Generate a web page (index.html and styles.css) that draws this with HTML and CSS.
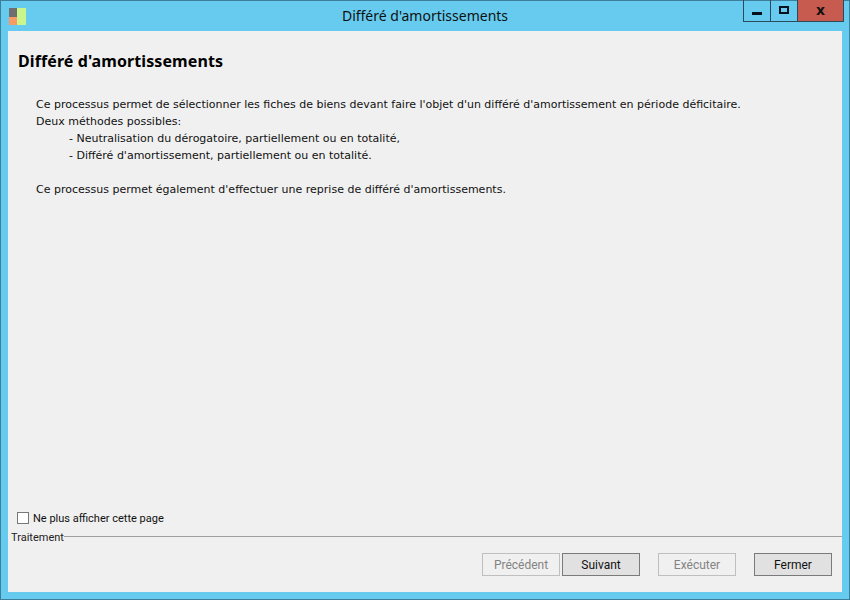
FILE: index.html
```html
<!DOCTYPE html>
<html lang="fr">
<head>
<meta charset="utf-8">
<title>Différé d'amortissements</title>
<link rel="stylesheet" href="styles.css">
</head>
<body>
<div class="window">
  <header class="titlebar">
    <svg class="app-icon" width="17" height="17" viewBox="0 0 17 17">
      <rect x="0" y="0" width="8" height="9" fill="#6f6f6f"/>
      <rect x="0" y="9" width="8" height="8" fill="#f79a66"/>
      <rect x="8" y="0" width="9" height="17" fill="#c9f58c"/>
    </svg>
    <div class="title">Différé d'amortissements</div>
    <div class="controls">
      <div class="ctl ctl-min"><span class="min-glyph"></span></div>
      <div class="ctl ctl-max"><span class="max-glyph"></span></div>
      <div class="ctl ctl-close">x</div>
    </div>
  </header>
  <main class="client">
    <section class="content">
      <h1 class="heading">Différé d'amortissements</h1>
      <div class="desc">
        <p>Ce processus permet de sélectionner les fiches de biens devant faire l'objet d'un différé d'amortissement en période déficitaire.</p>
        <p>Deux méthodes possibles:</p>
        <p class="item">- Neutralisation du dérogatoire, partiellement ou en totalité,</p>
        <p class="item">- Différé d'amortissement, partiellement ou en totalité.</p>
        <p class="blank">&nbsp;</p>
        <p>Ce processus permet également d'effectuer une reprise de différé d'amortissements.</p>
      </div>
    </section>
    <label class="check"><span class="box"></span>Ne plus afficher cette page</label>
    <div class="group-head"><span class="group-label">Traitement</span><span class="group-line"></span></div>
    <footer class="buttons">
      <button class="btn" disabled>Précédent</button>
      <button class="btn btn-next">Suivant</button>
      <button class="btn btn-exec" disabled>Exécuter</button>
      <button class="btn btn-close">Fermer</button>
    </footer>
  </main>
</div>
</body>
</html>
```
FILE: styles.css
```css
* { box-sizing: border-box; }
html, body { margin: 0; padding: 0; }
body { width: 850px; height: 600px; overflow: hidden; font-family: "Noto Sans", "Open Sans", sans-serif; }
.window { width: 850px; height: 600px; background: #66cbee; border: 1px solid #3b7f9b; display: flex; flex-direction: column; padding: 0 7px 7px; }
.titlebar { height: 30px; flex: none; display: flex; position: relative; align-items: flex-start; margin: 0 -1px; }
.app-icon { margin: 7px 0 0 2px; }
.title { position: absolute; left: 0; right: 0; top: 6px; text-align: center; font-size: 14px; line-height: 18px; color: #111; }
.controls { position: absolute; right: -1px; top: -1px; display: flex; height: 22px; border: 1px solid #2b4a5c; border-top: none; }
.ctl { height: 21px; display: flex; align-items: center; justify-content: center; }
.ctl-min { width: 27px; border-right: 1px solid #2b4a5c; }
.ctl-max { width: 26px; }
.ctl-close { width: 46px; background: #c75b50; font: bold 14px/18px "DejaVu Sans", sans-serif; color: #111; border-left: 1px solid #2b4a5c; padding-bottom: 2px; }
.min-glyph { width: 10px; height: 3px; background: #05111c; margin-top: 5px; }
.max-glyph { width: 10px; height: 8px; border: 2px solid #05111c; margin-bottom: 2px; }
.client { flex: 1; background: #f0f0f0; display: flex; flex-direction: column; }
.content { flex: 1; padding: 0 10px; }
.heading { margin: 20px 0 0; font-size: 16px; line-height: 20px; font-weight: 700; letter-spacing: 0.09px; color: #000; }
.desc { margin: 25px 0 0 18px; font-family: "DejaVu Sans", sans-serif; font-size: 11px; line-height: 17px; color: #111; }
.desc p { margin: 0; white-space: nowrap; }
.desc .item { padding-left: 33px; }
.check { display: flex; align-items: center; margin-left: 9px; font-family: Roboto, sans-serif; font-size: 11px; line-height: 14px; color: #111; height: 14px; margin-bottom: 5px; }
.box { width: 12px; height: 12px; border: 1px solid #777; background: #fff; margin-right: 4px; margin-top: -3px; }
.group-head { display: flex; align-items: center; height: 14px; margin-left: 3px; font-family: Roboto, sans-serif; font-size: 11px; color: #222; }
.group-label { line-height: 14px; }
.group-line { flex: 1; height: 1px; background: #a0a0a0; margin-top: -3px; }
.buttons { display: flex; justify-content: flex-end; height: 47px; padding: 8px 10px 0 0; flex: none; }
.btn { width: 78px; height: 23px; font-family: Roboto, sans-serif; font-size: 12px; padding: 0; background: #e1e1e1; border: 1px solid #7a7a7a; color: #111; }
.btn:disabled { background: #f0f0f0; border-color: #bfbfbf; color: #838383; }
.btn-next { margin-left: 2px; }
.btn-exec { margin-left: 18px; }
.btn-close { margin-left: 18px; }
```
